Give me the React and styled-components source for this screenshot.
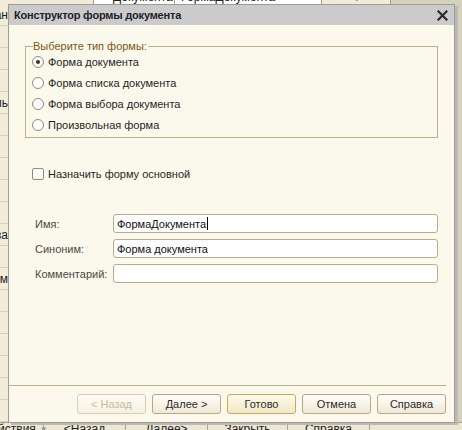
import React from "react"
import styled, { createGlobalStyle } from "styled-components"

const GlobalStyle = createGlobalStyle`
  html, body {
    margin: 0;
    padding: 0;
    background: #d5d1bd;
  }
  * {
    box-sizing: border-box;
  }
`

const FONT = `"Liberation Sans", Arial, sans-serif`

const radios = [
  "Форма документа",
  "Форма списка документа",
  "Форма выбора документа",
  "Произвольная форма",
]

const fields = [
  { label: "Имя:", value: "ФормаДокумента", caret: true },
  { label: "Синоним:", value: "Форма документа" },
  { label: "Комментарий:", value: "" },
]

const buttons = [
  { text: "< Назад", disabled: true },
  { text: "Далее >" },
  { text: "Готово", primary: true },
  { text: "Отмена" },
  { text: "Справка" },
]

// rows of the list that lies behind the dialog, only their last letters show
const leftRows = ["Основан", "", "", "", "Родитель", "", "", "", "", "", "Назва", "", "Форм", "", "", "", "", "", ""]

const App = () => {
  return (
    <Desktop>
      <GlobalStyle />

      <BackWindow>
        <TopStrip>
          <TopCell $w={94} $bg="#f0ecd8" />
          <TopCell $w={81} $pad={19}>Документа</TopCell>
          <TopCell $w={147} $pad={3}>ФормаДокумента</TopCell>
          <TopCell $w={69} $bg="#f0ecd8" $pad={18}>
            <span>✕</span>
            <span>⌕</span>
          </TopCell>
        </TopStrip>

        <Middle>
          <LeftCol>
            {leftRows.map((t, i) => (
              <LeftRow key={i}>{t}</LeftRow>
            ))}
          </LeftCol>
        </Middle>

        <BottomBar>
          <BarCell $w={56} $shift={-12}>Действия <Tri>▼</Tri></BarCell>
          <BarCell $w={82}>&lt;Назад</BarCell>
          <BarCell $w={82}>Далее&gt;</BarCell>
          <BarCell $w={80}>Закрыть</BarCell>
          <BarCell $w={82}>Справка</BarCell>
        </BottomBar>
      </BackWindow>

      <Dialog>
        <TitleBar>
          <Title>Конструктор формы документа</Title>
          <Close>
            <svg width="11" height="11" viewBox="0 0 11 11">
              <path d="M1.5 1.5 L9.5 9.5 M9.5 1.5 L1.5 9.5" stroke="#2b2b2b" strokeWidth="2.2" strokeLinecap="square" />
            </svg>
          </Close>
        </TitleBar>

        <Body>
          <Group>
            <Legend>Выберите тип формы:</Legend>
            {radios.map((r, i) => (
              <RadioRow key={r}>
                <Radio $checked={i === 0} />
                <span>{r}</span>
              </RadioRow>
            ))}
          </Group>

          <CheckRow>
            <CheckBox />
            <span>Назначить форму основной</span>
          </CheckRow>

          <Fields>
            {fields.map((f) => (
              <FieldRow key={f.label}>
                <FieldLabel>{f.label}</FieldLabel>
                <Input>
                  {f.value}
                  {f.caret && <Caret />}
                </Input>
              </FieldRow>
            ))}
          </Fields>

          <Footer>
            <Separator />
            <Buttons>
              {buttons.map((b) => (
                <Button key={b.text} $disabled={b.disabled} $primary={b.primary}>
                  {b.text}
                </Button>
              ))}
            </Buttons>
          </Footer>
        </Body>
      </Dialog>
    </Desktop>
  )
}

const Desktop = styled.div`
  position: relative;
  width: 462px;
  height: 430px;
  overflow: hidden;
  background: #d5d1bd;
  font-family: ${FONT};
  font-size: 11px;
  color: #222;
`

const BackWindow = styled.div`
  width: 100%;
  height: 100%;
  display: flex;
  flex-direction: column;
`

const TopStrip = styled.div`
  height: 4px;
  display: flex;
  align-items: flex-end;
  overflow: hidden;
  background: #d5d1bd;
`

const TopCell = styled.div`
  width: ${(p) => p.$w}px;
  height: 16px;
  margin-bottom: -3px;
  padding-left: ${(p) => p.$pad || 0}px;
  background: ${(p) => p.$bg || "#fff"};
  border-right: 1px solid #a7a28c;
  line-height: 13px;
  font-size: 12px;
  display: flex;
  gap: 6px;
  white-space: nowrap;
  overflow: hidden;
`

const Middle = styled.div`
  flex: 1;
  display: flex;
`

const LeftCol = styled.div`
  width: 8px;
  background: #f1edd9;
  display: flex;
  flex-direction: column;
  overflow: hidden;
`

const LeftRow = styled.div`
  height: 22px;
  flex: none;
  display: flex;
  justify-content: flex-end;
  align-items: center;
  border-bottom: 1px solid #d6d1ba;
  white-space: nowrap;
  font-size: 12px;
  color: #222;
`

const BottomBar = styled.div`
  height: 8px;
  display: flex;
  background: #ebe7d3;
  border-top: 1px solid #a9a48e;
  overflow: hidden;
`

const BarCell = styled.div`
  width: ${(p) => p.$w}px;
  margin-left: ${(p) => p.$shift || 0}px;
  flex: none;
  display: flex;
  justify-content: center;
  line-height: 13px;
  font-size: 12px;
  border-right: 1px solid #a9a48e;
  white-space: nowrap;
  gap: 4px;
`

const Tri = styled.span`
  color: #9a9688;
  font-size: 8px;
`

const Dialog = styled.div`
  position: absolute;
  left: 8px;
  top: 4px;
  width: 447px;
  height: 419px;
  display: flex;
  flex-direction: column;
  background: #fbf9ec;
  border: 1px solid #9c9c9c;
  box-shadow: 3px 2px 0 #bdbbb1;
`

const TitleBar = styled.div`
  height: 20px;
  flex: none;
  display: flex;
  align-items: center;
  justify-content: space-between;
  padding: 0 6px 0 5px;
  background: #cbcbcb;
`

const Title = styled.div`
  font-weight: bold;
  font-size: 11px;
  letter-spacing: -0.2px;
  color: #1e1e2a;
`

const Close = styled.div`
  width: 11px;
  height: 11px;
  display: flex;
`

const Body = styled.div`
  flex: 1;
  display: flex;
  flex-direction: column;
  padding: 0 16px;
`

const Group = styled.fieldset`
  margin: 15px 0 0;
  padding: 0 0 2px 6px;
  border: 1px solid #bcb28a;
  border-radius: 0;
  min-width: 0;
`

const Legend = styled.legend`
  padding: 0 1px 0 0;
  margin-left: 1px;
  color: #7c5816;
  font-size: 11px;
  line-height: 13px;
`

const RadioRow = styled.div`
  height: 21px;
  display: flex;
  align-items: center;
  gap: 4px;
  color: #1f1f1f;
  &:first-of-type {
    margin-top: -2px;
  }
`

const Radio = styled.span`
  width: 12px;
  height: 12px;
  border-radius: 50%;
  border: 1px solid #8f8b7a;
  background: #fff;
  display: flex;
  align-items: center;
  justify-content: center;
  &::after {
    content: "";
    width: 4px;
    height: 4px;
    border-radius: 50%;
    background: ${(p) => (p.$checked ? "#333" : "transparent")};
  }
`

const CheckRow = styled.div`
  height: 21px;
  margin: 25px 0 0 7px;
  display: flex;
  align-items: center;
  gap: 4px;
  color: #1f1f1f;
`

const CheckBox = styled.span`
  width: 12px;
  height: 12px;
  border: 1px solid #8f8b7a;
  border-radius: 2px;
  background: #fff;
`

const Fields = styled.div`
  margin-top: 30px;
  display: flex;
  flex-direction: column;
  gap: 6px;
`

const FieldRow = styled.div`
  display: flex;
  align-items: center;
`

const FieldLabel = styled.div`
  width: 88px;
  padding-left: 10px;
  color: #4b4a42;
`

const Input = styled.div`
  flex: 1;
  height: 19px;
  display: flex;
  align-items: center;
  padding-left: 3px;
  background: #fff;
  border: 1px solid #b5ad8b;
  border-radius: 3px;
  color: #111;
`

const Caret = styled.span`
  width: 1px;
  height: 13px;
  background: #000;
  margin-left: 1px;
`

const Footer = styled.div`
  margin-top: auto;
  margin-left: -16px;
  margin-right: -8px;
  display: flex;
  flex-direction: column;
`

const Separator = styled.div`
  height: 1px;
  background: #bcb28a;
`

const Buttons = styled.div`
  display: flex;
  justify-content: flex-end;
  gap: 6px;
  padding: 8px 0 8px;
`

const Button = styled.div`
  width: 69px;
  height: 20px;
  display: flex;
  align-items: center;
  justify-content: center;
  border-radius: 3px;
  border: 1px solid ${(p) => (p.$primary ? "#c8aa5c" : p.$disabled ? "#d6d0b6" : "#b3aa84")};
  background: ${(p) =>
    p.$disabled
      ? "linear-gradient(#fdfcf5, #f4f1e4)"
      : p.$primary
      ? "linear-gradient(#fffbea, #f1e7c6)"
      : "linear-gradient(#fffefa, #eee9d5)"};
  color: ${(p) => (p.$disabled ? "#c3bc9f" : "#2b2b2b")};
  font-size: 11px;
`

export default App
